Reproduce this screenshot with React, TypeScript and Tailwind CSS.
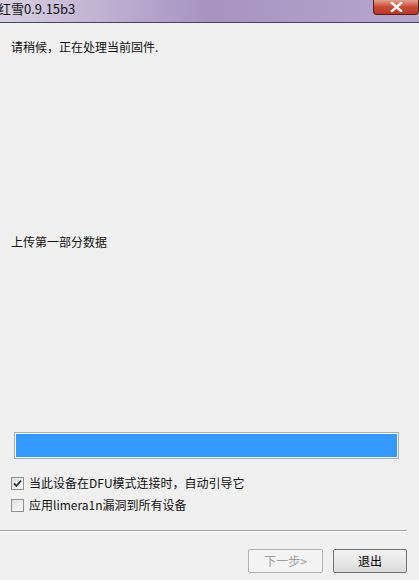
import React from 'react'

const font = { fontFamily: '"Noto Sans CJK SC", "Noto Sans", sans-serif' }

function Check({ checked }: { checked?: boolean }) {
  return (
    <div className="w-[13px] h-[13px] border border-[#8e8f8f] bg-gradient-to-br from-[#dcdcdc] to-white flex items-center justify-center">
      {checked && (
        <svg width="9" height="9" viewBox="0 0 9 9">
          <path d="M1 4.5 L3.5 7 L8 1.5" fill="none" stroke="#333" strokeWidth="1.8" />
        </svg>
      )}
    </div>
  )
}

export default function App() {
  return (
    <div className="w-[419px] h-[580px] bg-[#f0f0f0] overflow-hidden flex flex-col text-[12px] text-black" style={font}>
      {/* title bar */}
      <div className="h-[23px] shrink-0 flex items-start justify-between border-b border-[#4a4060] bg-gradient-to-r from-[#d8d0e2] via-[#a892c2] to-[#b7a7cc]">
        <span className="ml-[-2px] mt-[1px] text-[13px] leading-[16px] text-[#111]">红雪0.9.15b3</span>
        <div className="w-[46px] h-[15px] rounded-b-[4px] border border-t-0 border-[#5a1d14] bg-gradient-to-b from-[#e3a08f] via-[#c94a36] to-[#b8382a] flex items-center justify-center">
          <svg width="13" height="10" viewBox="0 0 13 10">
            <path d="M2 1 L11 9 M11 1 L2 9" stroke="white" strokeWidth="2.4" strokeLinecap="square" />
          </svg>
        </div>
      </div>

      <div className="flex-1 flex flex-col pl-[11px]">
        <div className="mt-[16px] leading-[16px] text-[#111]">请稍候，正在处理当前固件.</div>
        <div className="mt-[179px] leading-[16px] text-[#111]">上传第一部分数据</div>

        <div className="mt-[182px] ml-[3px] w-[385px] h-[27px] border border-[#a4b0b6] bg-[#f8f8f8] p-[1px]">
          <div className="h-full w-full bg-[#3399ff]" />
        </div>

        <div className="mt-[16px] flex items-center gap-[5px] leading-[16px] text-[#111]">
          <Check checked />
          <span>当此设备在DFU模式连接时，自动引导它</span>
        </div>
        <div className="mt-[6px] flex items-center gap-[5px] leading-[16px] text-[#111]">
          <Check />
          <span>应用limera1n漏洞到所有设备</span>
        </div>
      </div>

      <div className="w-[407px] h-[2px] border-t border-b border-t-[#a0a0a0] border-b-white mb-[17px]" />

      <div className="flex justify-end gap-[10px] pr-[12px] mb-[7px]">
        <button className="w-[75px] h-[24px] border border-[#adb2b5] bg-[#f4f4f4] text-[#9c9c9c] rounded-[2px]">下一步&gt;</button>
        <button className="w-[74px] h-[24px] border border-[#707070] bg-gradient-to-b from-[#f3f3f3] to-[#dcdcdc] text-black rounded-[2px]">退出</button>
      </div>
    </div>
  )
}
